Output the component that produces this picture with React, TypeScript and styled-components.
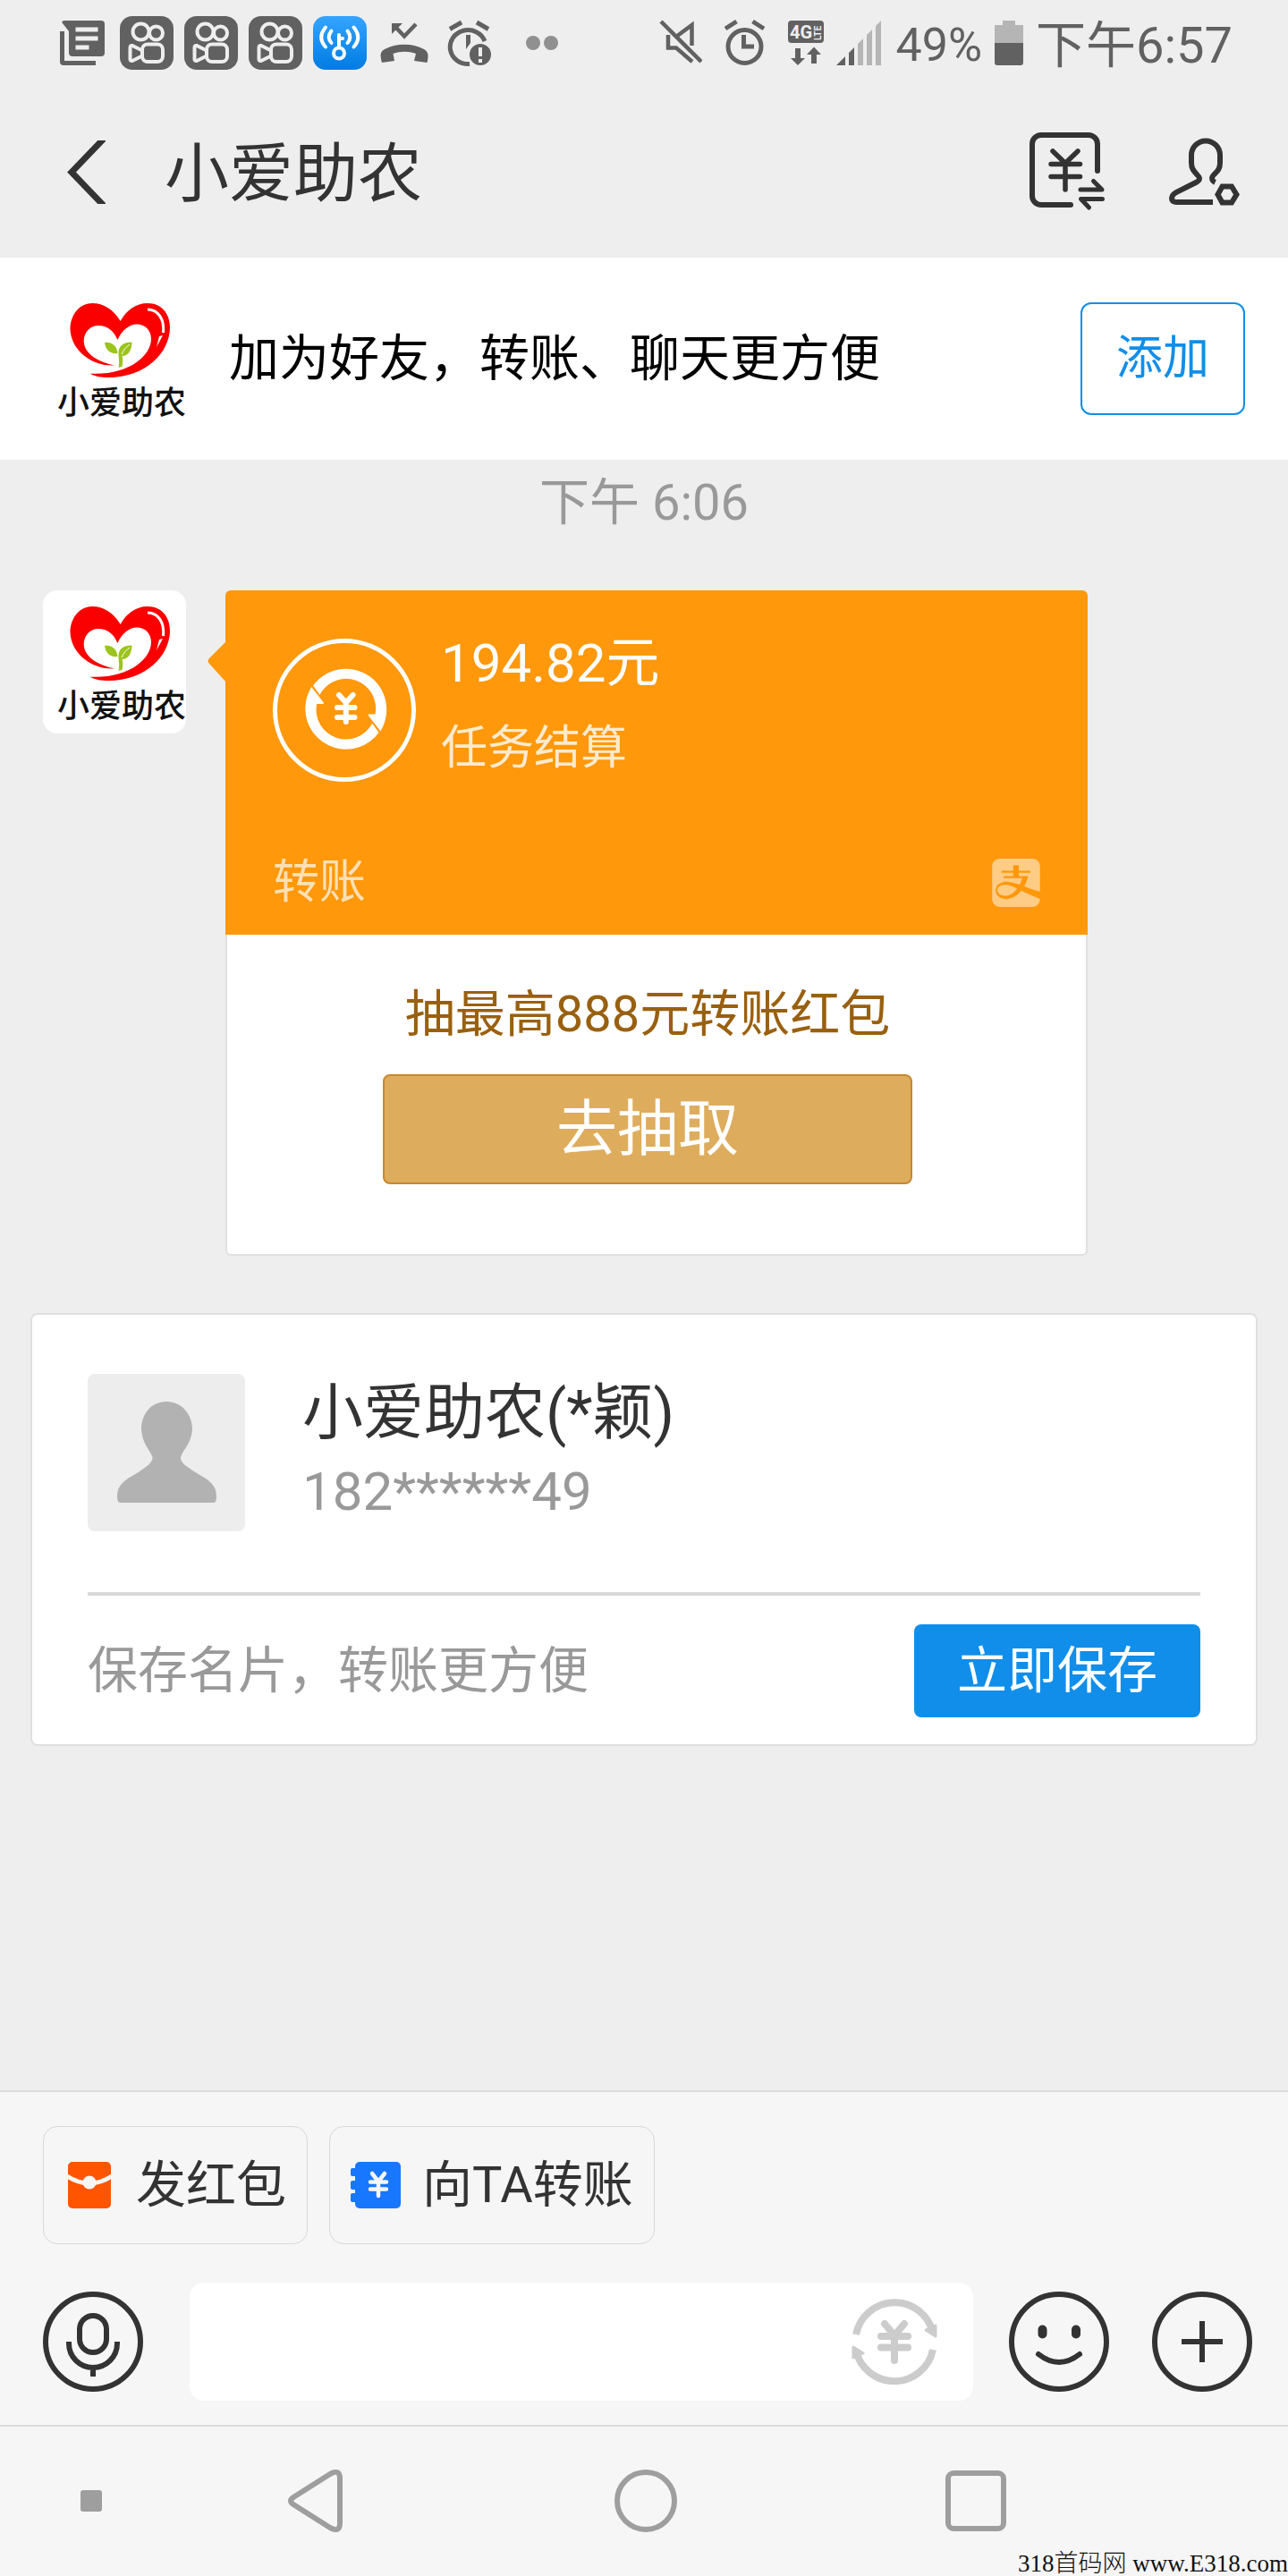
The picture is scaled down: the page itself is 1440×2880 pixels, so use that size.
import React from 'react';
import styled, { createGlobalStyle } from 'styled-components';
import { SiAlipay } from 'react-icons/si';

const GlobalStyle = createGlobalStyle`
  * { box-sizing: border-box; }
  body { margin: 0; background: #eeeeee; }
  body, button, input { font-family: Roboto, "Noto Sans CJK SC", sans-serif; font-weight: 400; }
  button { margin: 0; padding: 0; border: 0; background: none; color: inherit; line-height: 84px; cursor: pointer; }
  svg { display: block; flex: none; }
`;

const Page = styled.div`
  position: relative;
  display: flex;
  flex-direction: column;
  min-height: 100vh;
  color: #333333;
`;

const StatusBar = styled.div`
  display: flex;
  align-items: center;
  justify-content: space-between;
  height: 96px;
  padding: 0 62px;
  color: #616161;
`;

const StatusGroup = styled.div<{ $gap: number }>`
  display: flex;
  align-items: center;
  gap: ${(p) => p.$gap}px;
`;

const StatusText = styled.span<{ $size: number }>`
  padding-top: 6px;
  font-size: ${(p) => p.$size}px;
  line-height: 60px;
  white-space: nowrap;
`;

const Header = styled.header`
  display: flex;
  align-items: center;
  height: 192px;
  padding: 0 54px 0 74px;
`;

const Title = styled.h1`
  flex: 1;
  margin: 0 0 0 66px;
  padding-top: 6px;
  font-size: 72px;
  line-height: 96px;
  font-weight: 400;
`;

const HeaderActions = styled.div`
  display: flex;
  align-items: center;
  gap: 68px;
`;

const Banner = styled.section`
  display: flex;
  align-items: center;
  height: 226px;
  padding: 0 48px;
  background: #ffffff;
`;

const BannerText = styled.p`
  flex: 1;
  margin: 0 0 0 48px;
  font-size: 56px;
  line-height: 84px;
  color: #000000;
`;

const AddButton = styled.button`
  width: 184px;
  height: 126px;
  border: 2px solid #108ee9;
  border-radius: 12px;
  font-size: 52px;
  color: #108ee9;
`;

const LogoBox = styled.div`
  position: relative;
  flex: none;
  width: 160px;
  height: 160px;
  border-radius: 16px;
  background: #ffffff;
  overflow: hidden;
`;

const LogoName = styled.span`
  position: absolute;
  left: 16px;
  bottom: 10px;
  font-size: 36px;
  line-height: 40px;
  font-weight: 500;
  color: #111111;
  white-space: nowrap;
`;

const Chat = styled.main`
  flex: 1;
`;

const TimeStamp = styled.div`
  font-size: 56px;
  line-height: 96px;
  text-align: center;
  color: #999999;
`;

const MessageRow = styled.div`
  display: flex;
  align-items: flex-start;
  gap: 44px;
  padding: 50px 224px 0 48px;
`;

const Bubble = styled.article`
  position: relative;
  flex: 1;
`;

const BubbleArrow = styled.svg`
  position: absolute;
  left: -20px;
  top: 57px;
`;

const Transfer = styled.div`
  padding: 54px 53px 22px;
  border-radius: 6px 6px 0 0;
  background: #ff980a;
  color: #ffffff;
`;

const TransferTop = styled.div`
  display: flex;
  gap: 28px;
`;

const TransferInfo = styled.div`
  display: flex;
  flex-direction: column;
  gap: 43px;
  padding-top: 2px;
`;

const Amount = styled.strong`
  font-size: 60px;
  line-height: 52px;
  font-weight: 400;
`;

const Note = styled.span`
  font-size: 52px;
  line-height: 52px;
  color: rgba(255, 255, 255, 0.8);
`;

const TransferFoot = styled.div`
  display: flex;
  align-items: center;
  justify-content: space-between;
  margin-top: 77px;
  font-size: 52px;
  line-height: 72px;
  color: rgba(255, 255, 255, 0.7);
`;

const Brand = styled.span`
  display: flex;
  color: rgba(255, 255, 255, 0.5);
`;

const Lottery = styled.div`
  display: flex;
  flex-direction: column;
  align-items: center;
  gap: 25px;
  padding: 47px 20px 78px 0;
  border: 2px solid #e0e0e0;
  border-top: 0;
  border-radius: 0 0 6px 6px;
  background: #ffffff;
`;

const LotteryText = styled.p`
  margin: 0;
  font-size: 56px;
  line-height: 84px;
  color: #99600f;
`;

const DrawButton = styled.button`
  width: 592px;
  height: 123px;
  border: 2px solid #c8872f;
  border-radius: 8px;
  background: #deac5d;
  font-size: 68px;
  color: #ffffff;
`;

const ContactCard = styled.section`
  margin: 64px 34px 0;
  padding: 66px 62px 30px;
  border: 2px solid #e0e0e0;
  border-radius: 8px;
  background: #ffffff;
`;

const Contact = styled.div`
  display: flex;
  gap: 64px;
  padding-bottom: 68px;
  border-bottom: 4px solid #d8d8d8;
`;

const Portrait = styled.svg`
  border-radius: 8px;
  background: #ededed;
`;

const ContactName = styled.h2`
  margin: 0;
  font-size: 68px;
  line-height: 88px;
  font-weight: 400;
`;

const ContactPhone = styled.p`
  margin: 0;
  font-size: 60px;
  line-height: 88px;
  color: #999999;
`;

const SaveRow = styled.div`
  display: flex;
  align-items: center;
  justify-content: space-between;
  padding-top: 32px;
  font-size: 56px;
  line-height: 84px;
  color: #999999;
`;

const SaveButton = styled.button`
  width: 320px;
  height: 104px;
  border-radius: 8px;
  background: #118eea;
  font-size: 56px;
  color: #ffffff;
`;

const Composer = styled.footer`
  padding: 38px 40px 27px 48px;
  border-top: 2px solid #dcdcdc;
  background: #f6f6f6;
`;

const Chips = styled.div`
  display: flex;
  gap: 24px;
`;

const Chip = styled.button`
  display: flex;
  align-items: center;
  gap: 24px;
  height: 132px;
  padding: 0 23px;
  border: 1px solid #d8d8d8;
  border-radius: 16px;
  font-size: 56px;
  color: #333333;
`;

const InputRow = styled.div`
  display: grid;
  grid-template-columns: 112px minmax(0, 1fr) 112px 112px;
  align-items: center;
  column-gap: 48px;
  margin-top: 43px;
`;

const Field = styled.div`
  display: flex;
  align-items: center;
  height: 132px;
  margin: 0 -8px 0 4px;
  padding: 0 40px 0 32px;
  border-radius: 16px;
  background: #ffffff;
`;

const TextInput = styled.input`
  flex: 1;
  min-width: 0;
  height: 100%;
  border: 0;
  outline: 0;
  background: transparent;
  font-size: 56px;
`;

const NavBar = styled.nav`
  display: grid;
  grid-template-columns: 168px 1fr 1fr 1fr 164px;
  align-items: center;
  height: 169px;
  padding-bottom: 1px;
  border-top: 2px solid #dcdcdc;
  background: #f6f6f6;
`;

const NavButton = styled.button`
  justify-self: center;
`;

const NavDot = styled.button`
  width: 24px;
  height: 24px;
  margin-left: 90px;
  border-radius: 3px;
  background: #9e9e9e;
`;

const Watermark = styled.div`
  position: absolute;
  right: 0;
  bottom: 0;
  font-family: "Liberation Serif", "Noto Sans CJK SC", serif;
  font-size: 27px;
  line-height: 28px;
  font-weight: 300;
  color: #111111;
  white-space: pre;
`;

const Logo = () => (
  <LogoBox>
    <svg width="160" height="160" viewBox="0 0 160 160" aria-hidden="true">
      <path
        fill="#fb0000"
        d="M86.7 38C79 25 68 18 55 18C40 18 30.5 32 30.5 47C31 68 52 89 80 87.5C64 84 46 76 45.7 60C46 50 53 43 62 43C73 43 80 50 83.3 59C88 49 96 41.5 105 41.5C114 41.5 121 48 121 58C121 77 95 99 53 96.7C58 100 66 101 73 101C115 101 142 73 142 45C142 29 132 18 117 18C104 18 93 26 86.7 38Z"
      />
      <path d="M117 25C129 25 136 36 134.5 51" fill="none" stroke="#fff" strokeWidth="3" />
      <path d="M134 54L127 67L130 55Z" fill="#fff" />
      <path
        fill="#9bc41c"
        d="M69 62C77 61 83 66 83.5 74C75 75 70 70 69 62ZM99.500 61.500C99 72 95 77 88.500 77C90 82 89 86 88.500 89L84.500 90C86 84 84.500 79 84.500 74C84 66 90 61.500 99.500 61.500Z"
      />
      <path d="M88 75C90 70 93 67 97 64" fill="none" stroke="#fff" strokeWidth="1" />
    </svg>
    <LogoName>小爱助农</LogoName>
  </LogoBox>
);

const DocIcon = () => (
  <svg width="60" height="60" viewBox="0 0 60 60" aria-hidden="true">
    <path fill="#616161" d="M10 5H51a4 4 0 0 1 4 4V41a4 4 0 0 1-4 4H19a4 4 0 0 1-4-4V17L7.500 7.500Q7 5 10 5Z" />
    <path fill="#616161" d="M5 17H10V50H45V55H9a4 4 0 0 1-4-4Z" />
    <path d="M22.500 15H47.500M22.500 25H47.500M22.500 35H37.500" stroke="#eee" strokeWidth="5" />
  </svg>
);

const VideoAppIcon = () => (
  <svg width="60" height="60" viewBox="0 0 60 60" aria-hidden="true">
    <rect width="60" height="60" rx="14" fill="#616161" />
    <g fill="none" stroke="#eee" strokeWidth="4" strokeLinejoin="round">
      <circle cx="23.500" cy="17.500" r="9" />
      <circle cx="40.500" cy="19" r="7.500" />
      <rect x="25" y="31.500" width="23" height="19.500" rx="6" />
      <path d="M24 38L14 33Q11.500 32.500 11.500 35V48Q11.500 50.500 14 50L24 45" />
    </g>
  </svg>
);

const WifiKeyIcon = () => (
  <svg width="60" height="60" viewBox="0 0 60 60" aria-hidden="true">
    <defs>
      <linearGradient id="wifiBlue" x1="0" y1="0" x2="0" y2="1">
        <stop offset="0" stopColor="#35a4ff" />
        <stop offset="1" stopColor="#007ce2" />
      </linearGradient>
    </defs>
    <rect width="60" height="60" rx="14" fill="url(#wifiBlue)" />
    <g fill="none" stroke="#fff" strokeWidth="4" strokeLinecap="round">
      <circle cx="29" cy="41.500" r="6" />
      <path d="M29 35V21M29 25H33" />
      <path d="M20.500 16.500Q15 24 20.500 30M14 12.500Q4.500 24 14 34.500" />
      <path d="M38.500 16.500Q44 24 38.500 30M45.500 12.500Q55 24 45.500 34.500" />
    </g>
  </svg>
);

const MissedCallIcon = () => (
  <svg width="60" height="60" viewBox="0 0 60 60" aria-hidden="true">
    <path d="M19 11L30 22.500L43 9" fill="none" stroke="#616161" strokeWidth="4.500" />
    <path fill="#616161" d="M16 8H28L16 20Z" />
    <path fill="#616161" d="M5 52C3 44 2.500 40 8 37C21 30 39 30 52 37C57 40 57.500 44 55.500 52L41 50L43 42C35 39 26 39 17.500 42L19 50Z" />
  </svg>
);

const AlarmAlertIcon = () => (
  <svg width="60" height="60" viewBox="0 0 60 60" aria-hidden="true">
    <g fill="none" stroke="#616161" strokeWidth="5">
      <path d="M9 14.500L22 7M39 7L52 14.500" />
      <path d="M48 28A20 19 0 1 0 31 53.500" />
    </g>
    <path fill="#616161" d="M27 21H32V30L27 37Z" />
    <circle cx="43" cy="43" r="12" fill="#616161" />
    <path d="M43 35V45M43 48V52" stroke="#eee" strokeWidth="4" />
  </svg>
);

const MoreDots = () => (
  <svg width="80" height="60" viewBox="0 0 80 60" aria-hidden="true">
    <circle cx="30" cy="30" r="8" fill="#909090" />
    <circle cx="50" cy="30" r="8" fill="#909090" />
  </svg>
);

const MuteIcon = () => (
  <svg width="48" height="60" viewBox="0 0 48 60" aria-hidden="true">
    <g fill="none" stroke="#616161" strokeWidth="4.500">
      <path d="M2 6L47 51" />
      <path d="M19 23L36.500 10V33" />
      <path d="M10 21V35.500H19L37 51" />
    </g>
  </svg>
);

const AlarmIcon = () => (
  <svg width="48" height="60" viewBox="0 0 48 60" aria-hidden="true">
    <g fill="none" stroke="#616161" strokeWidth="5">
      <circle cx="23.500" cy="34" r="18.500" />
      <path d="M2 14L14.500 6M32.500 6L45 14" />
      <path d="M22.500 21V34H34" />
    </g>
  </svg>
);

const LteIcon = () => (
  <svg width="40" height="60" viewBox="0 0 40 60" aria-hidden="true">
    <rect y="5" width="40" height="25" rx="4" fill="#616161" />
    <text x="2" y="25" fontFamily="Roboto, sans-serif" fontSize="20" fontWeight="700" fill="#eee">4G</text>
    <text x="-27" y="37" transform="rotate(-90)" fontFamily="Roboto, sans-serif" fontSize="10" fontWeight="700" fill="#eee">LTE</text>
    <path fill="#616161" d="M8 36H14V47H19L11 55L3 47H8ZM26 53H32V43H37L29 34.500L21 43H26Z" />
  </svg>
);

const SignalIcon = () => (
  <svg width="52" height="60" viewBox="0 0 52 60" aria-hidden="true">
    <path fill="#616161" d="M0 55L10 45V55ZM14 41L20 35V55H14Z" />
    <path fill="#b5b5b5" d="M24 31L30 25V55H24ZM34 21L40 15V55H34ZM44 11L50 5V55H44Z" />
  </svg>
);

const BatteryIcon = () => (
  <svg width="32" height="60" viewBox="0 0 32 60" aria-hidden="true">
    <path fill="#b5b5b5" d="M9 5H23V10H32V30H0V10H9Z" />
    <path fill="#616161" d="M0 30H32V52a3 3 0 0 1-3 3H3a3 3 0 0 1-3-3Z" />
  </svg>
);

const BackIcon = () => (
  <svg width="44" height="71" viewBox="0 0 44 71" aria-hidden="true">
    <path d="M43 -3L6 35.500L43 74" fill="none" stroke="#333" strokeWidth="7" />
  </svg>
);

const TransferRecordIcon = () => (
  <svg width="88" height="90" viewBox="0 0 88 90" fill="none" stroke="#333" strokeWidth="6" strokeLinecap="round" strokeLinejoin="round" aria-hidden="true">
    <path d="M77 44V14a10 10 0 0 0-10-10H14a10 10 0 0 0-10 10V72a10 10 0 0 0 10 10H47" />
    <path d="M27 22L41 35.500L55 22M25 36.500H57.500M25 50.500H57.500M41 36.500V65" strokeWidth="5.500" />
    <path d="M58 65H82L72.500 55.500M82.500 75.500H58.500L67.500 85" strokeWidth="5" />
  </svg>
);

const FriendSettingsIcon = () => (
  <svg width="80" height="78" viewBox="0 0 80 78" fill="none" stroke="#333" strokeWidth="6" aria-hidden="true">
    <path d="M52.500 51C48.500 49 48 45.500 51 42.500C55.500 38 58 36 58 29V20.500A16 16 0 0 0 26 20.500V29C26 36 29 38.500 33 43C36 46 35.500 48.500 32 50.500L9 62C2.500 66 2 73 9.500 73H50" />
    <path d="M76.500 64.500L71 73.500H60.500L55.500 64.500L60.500 55.500H71Z" strokeWidth="6" />
  </svg>
);

const halfTurn =
  'M45 52.500A45.500 45.500 0 0 1 127.300 79C127.300 88 125 96 120.400 103.500L106.800 86V84.500H114.500A33.200 33.200 0 0 0 52.500 62.700Z';

const TransferCoinIcon = () => (
  <svg width="160" height="160" viewBox="0 0 160 160" aria-hidden="true">
    <circle cx="80" cy="80" r="77.500" fill="none" stroke="#fff" strokeWidth="5" />
    <path d={halfTurn} fill="#fff" />
    <path d={halfTurn} fill="#fff" transform="rotate(180 81.800 78.700)" />
    <path
      d="M74 63L81.800 71.500L89.600 63M72 77H91.500M72 88H91.500M81.800 72V93"
      fill="none"
      stroke="#fff"
      strokeWidth="6"
      strokeLinecap="round"
    />
  </svg>
);

const RedPacketIcon = () => (
  <svg width="56" height="52" viewBox="-4 0 56 52" aria-hidden="true">
    <rect width="48" height="52" rx="5" fill="#ff5500" />
    <path d="M-1 16Q24 32 49 16" fill="none" stroke="#f6f6f6" strokeWidth="5" />
    <circle cx="24" cy="23" r="7.500" fill="#f6f6f6" />
  </svg>
);

const BlueTransferIcon = () => (
  <svg width="56" height="52" viewBox="0 0 56 52" aria-hidden="true">
    <g fill="#1777ff">
      <rect x="5" width="51" height="52" rx="5" />
      <rect y="7" width="8" height="9" rx="2" />
      <rect y="21" width="8" height="10" rx="2" />
      <rect y="35" width="8" height="10" rx="2" />
    </g>
    <path d="M24 13L31 22L38 13M22 22.500H40M22 30.500H40M31 22V38" fill="none" stroke="#f6f6f6" strokeWidth="4.500" strokeLinecap="round" />
  </svg>
);

const Ring = ({ children }: { children: React.ReactNode }) => (
  <svg width="112" height="112" viewBox="0 0 112 112" fill="none" stroke="#333" strokeWidth="6" aria-hidden="true">
    <circle cx="56" cy="56" r="53" />
    {children}
  </svg>
);

const YenCycleIcon = () => (
  <svg width="96" height="96" viewBox="0 0 96 96" fill="none" stroke="#ccc" strokeWidth="8" aria-hidden="true">
    <path d="M5 40A44 44 0 0 1 91 38M91 57A44 44 0 0 1 5 58" />
    <path d="M83 35L94 42V30ZM13 61L2 54V66Z" fill="#ccc" strokeWidth="3" strokeLinejoin="round" />
    <path d="M37 28L48 41L59 28M33 42H63M33 54.500H63M48 42V69" strokeLinecap="round" />
  </svg>
);

export default function App() {
  return (
    <>
      <GlobalStyle />
      <Page>
        <StatusBar>
          <StatusGroup $gap={12}>
            <DocIcon />
            <VideoAppIcon />
            <VideoAppIcon />
            <VideoAppIcon />
            <WifiKeyIcon />
            <MissedCallIcon />
            <AlarmAlertIcon />
            <MoreDots />
          </StatusGroup>
          <StatusGroup $gap={14}>
            <StatusGroup $gap={24}>
              <MuteIcon />
              <AlarmIcon />
              <LteIcon />
            </StatusGroup>
            <SignalIcon />
            <StatusText $size={52}>49%</StatusText>
            <BatteryIcon />
            <StatusText $size={56}>下午6:57</StatusText>
          </StatusGroup>
        </StatusBar>

        <Header>
          <button type="button" aria-label="返回">
            <BackIcon />
          </button>
          <Title>小爱助农</Title>
          <HeaderActions>
            <button type="button" aria-label="转账记录">
              <TransferRecordIcon />
            </button>
            <button type="button" aria-label="好友设置">
              <FriendSettingsIcon />
            </button>
          </HeaderActions>
        </Header>

        <Banner>
          <Logo />
          <BannerText>加为好友，转账、聊天更方便</BannerText>
          <AddButton type="button">添加</AddButton>
        </Banner>

        <Chat>
          <TimeStamp>下午 6:06</TimeStamp>
          <MessageRow>
            <Logo />
            <Bubble>
              <BubbleArrow width="21" height="46" viewBox="0 0 21 46" aria-hidden="true">
                <path d="M21 0L2 19Q-1 22 2 25L21 46Z" fill="#ff980a" />
              </BubbleArrow>
              <Transfer>
                <TransferTop>
                  <TransferCoinIcon />
                  <TransferInfo>
                    <Amount>194.82元</Amount>
                    <Note>任务结算</Note>
                  </TransferInfo>
                </TransferTop>
                <TransferFoot>
                  <span>转账</span>
                  <Brand>
                    <SiAlipay size={54} aria-label="支付宝" />
                  </Brand>
                </TransferFoot>
              </Transfer>
              <Lottery>
                <LotteryText>抽最高888元转账红包</LotteryText>
                <DrawButton type="button">去抽取</DrawButton>
              </Lottery>
            </Bubble>
          </MessageRow>

          <ContactCard>
            <Contact>
              <Portrait width="176" height="176" viewBox="0 0 176 176" aria-hidden="true">
                <path
                  fill="#b2b2b2"
                  d="M88 31C105 31 117 45 117 62C116 78 107 84 104 93C103 99 111 104 122 111C136 119 144 124 144 137Q144 144 141 144H36Q33 144 33 137C33 124 41 119 55 111C66 104 73 99 72.500 93C69 84 61 78 60 62C60 45 71 31 88 31Z"
                />
              </Portrait>
              <div>
                <ContactName>小爱助农(*颖)</ContactName>
                <ContactPhone>182******49</ContactPhone>
              </div>
            </Contact>
            <SaveRow>
              <span>保存名片，转账更方便</span>
              <SaveButton type="button">立即保存</SaveButton>
            </SaveRow>
          </ContactCard>
        </Chat>

        <Composer>
          <Chips>
            <Chip type="button">
              <RedPacketIcon />
              发红包
            </Chip>
            <Chip type="button">
              <BlueTransferIcon />
              向TA转账
            </Chip>
          </Chips>
          <InputRow>
            <button type="button" aria-label="语音">
              <Ring>
                <rect x="41" y="27" width="30" height="41" rx="15" />
                <path d="M29 56v2a27 27 0 0 0 54 0v-2M56 85V95" />
              </Ring>
            </button>
            <Field>
              <TextInput type="text" aria-label="消息" />
              <button type="button" aria-label="转账">
                <YenCycleIcon />
              </button>
            </Field>
            <button type="button" aria-label="表情">
              <Ring>
                <path d="M37.500 42.500V47.500M75 42.500V47.500" strokeWidth="10" strokeLinecap="round" />
                <path d="M33 70Q56 88 79 70" strokeLinecap="round" />
              </Ring>
            </button>
            <button type="button" aria-label="更多">
              <Ring>
                <path d="M33 56H79M56 33V79" />
              </Ring>
            </button>
          </InputRow>
        </Composer>

        <NavBar>
          <NavDot type="button" aria-label="隐藏导航栏" />
          <NavButton type="button" aria-label="后退">
            <svg width="62" height="70" viewBox="0 0 62 70" fill="none" stroke="#9e9e9e" strokeWidth="6" strokeLinejoin="round" aria-hidden="true">
              <path d="M6 31L47 5Q58 -1 58 10V60Q58 71 47 65L6 39Q0 35 6 31Z" />
            </svg>
          </NavButton>
          <NavButton type="button" aria-label="主屏幕">
            <svg width="70" height="70" viewBox="0 0 70 70" fill="none" stroke="#9e9e9e" strokeWidth="6" aria-hidden="true">
              <circle cx="35" cy="35" r="32" />
            </svg>
          </NavButton>
          <NavButton type="button" aria-label="最近任务">
            <svg width="68" height="68" viewBox="0 0 68 68" fill="none" stroke="#9e9e9e" strokeWidth="6" aria-hidden="true">
              <rect x="3" y="3" width="62" height="62" rx="6" />
            </svg>
          </NavButton>
        </NavBar>

        <Watermark>318首码网 www.E318.com</Watermark>
      </Page>
    </>
  );
}
